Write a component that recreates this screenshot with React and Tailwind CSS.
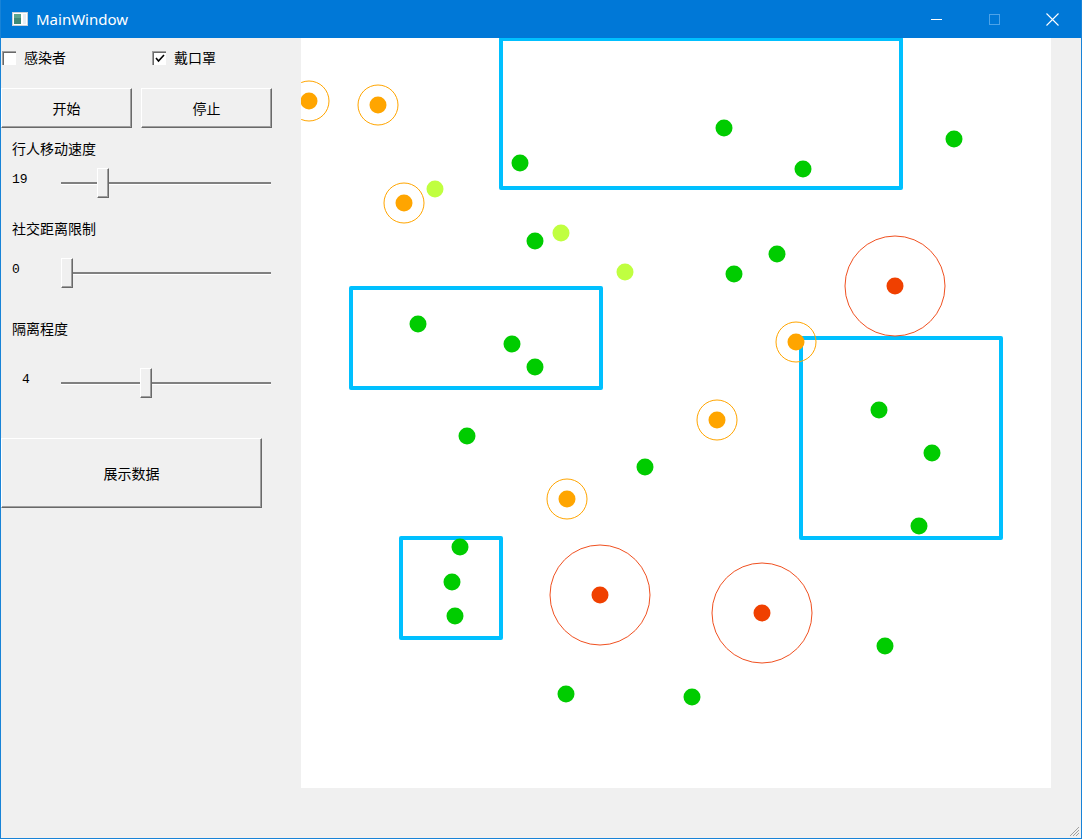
const CJK = { fontFamily: '"Noto Sans CJK SC", "Noto Sans", sans-serif' };
const MONO = { fontFamily: '"Liberation Mono", "DejaVu Sans Mono", monospace' };

const GREEN = '#00cc00';
const ORANGE = '#ffa500';
const RED = '#f04000';
const LIME = '#c0ff40';
const CYAN = '#00c0ff';

const ZONES = [
  { x: 200, y: 1, w: 400, h: 149 },
  { x: 50, y: 250, w: 250, h: 100 },
  { x: 500, y: 300, w: 200, h: 200 },
  { x: 100, y: 500, w: 100, h: 100 },
];

const EXPOSED = [[8, 63], [77, 67], [103, 165], [495, 304], [416, 382], [266, 461]];
const INFECTED = [[594, 248], [299, 557], [461, 575]];
const MASKED = [[134, 151], [260, 195], [324, 234]];
const HEALTHY = [
  [423, 90], [219, 125], [502, 131], [653, 101], [234, 203], [476, 216], [433, 236],
  [117, 286], [211, 306], [234, 329], [578, 372], [631, 415], [166, 398], [344, 429],
  [618, 488], [159, 509], [151, 544], [154, 578], [584, 608], [265, 656], [391, 659],
];

const Checkbox = ({ checked, label, className = '' }) => (
  <div className={`flex items-center gap-[8px] ${className}`}>
    <div className="w-[14px] h-[14px] bg-white border-t border-l border-[#a0a0a0] shadow-[inset_1px_1px_#696969] flex items-center justify-center">
      {checked && (
        <svg width="10" height="9" viewBox="0 0 10 9">
          <path d="M1 4 L3.5 7 L9 1" fill="none" stroke="#000" strokeWidth="1.6" />
        </svg>
      )}
    </div>
    <span className="text-[14px] text-black leading-none -mt-[2px]" style={CJK}>{label}</span>
  </div>
);

const Button = ({ children, className = '' }) => (
  <div
    className={`flex items-center justify-center bg-[#f0f0f0] border-t border-l border-white border-r border-b border-r-[#696969] border-b-[#696969] shadow-[inset_-1px_-1px_#a0a0a0] text-[14px] text-black ${className}`}
    style={CJK}
  >
    {children}
  </div>
);

const Slider = ({ value, offset, valueClass = 'pl-[11px]' }) => (
  <div className="flex items-center h-[30px]">
    <div className={`w-[60px] text-[13px] text-black -mt-[6px] ${valueClass}`} style={MONO}>{value}</div>
    <div className="relative w-[210px] h-[30px]">
      <div className="absolute left-0 right-0 top-[14px] h-[2px] bg-[#808080]" />
      <div className="absolute left-0 right-0 top-[16px] h-[1px] bg-white" />
      <div
        className="absolute top-0 w-[12px] h-[30px] bg-[#f0f0f0] border-t border-l border-white border-r border-b border-r-[#696969] border-b-[#696969] shadow-[inset_-1px_-1px_#a0a0a0]"
        style={{ left: offset }}
      />
    </div>
  </div>
);

const Label = ({ children, className = '' }) => (
  <div className={`h-[20px] flex items-center pl-[11px] text-[14px] text-black ${className}`} style={CJK}>
    {children}
  </div>
);

const Simulation = () => (
  <svg width="750" height="750" className="block bg-white">
    {ZONES.map((z, i) => (
      <rect key={i} x={z.x} y={z.y} width={z.w} height={z.h} fill="none" stroke={CYAN} strokeWidth="4" strokeLinejoin="round" />
    ))}
    {EXPOSED.map(([x, y], i) => (
      <g key={`e${i}`}>
        <circle cx={x} cy={y} r="20" fill="none" stroke={ORANGE} strokeWidth="1" />
        <circle cx={x} cy={y} r="8.5" fill={ORANGE} />
      </g>
    ))}
    {INFECTED.map(([x, y], i) => (
      <g key={`i${i}`}>
        <circle cx={x} cy={y} r="50" fill="none" stroke="#f05020" strokeWidth="1" />
        <circle cx={x} cy={y} r="8.5" fill={RED} />
      </g>
    ))}
    {MASKED.map(([x, y], i) => (
      <circle key={`m${i}`} cx={x} cy={y} r="8.5" fill={LIME} />
    ))}
    {HEALTHY.map(([x, y], i) => (
      <circle key={`h${i}`} cx={x} cy={y} r="8.5" fill={GREEN} />
    ))}
  </svg>
);

const TitleBar = () => (
  <div className="h-[38px] bg-[#0078d7] flex items-center text-white shrink-0">
    <svg width="16" height="14" viewBox="0 0 16 14" className="ml-[11px]">
      <rect x="0.5" y="0.5" width="15" height="13" fill="#fff" stroke="#c8d0d8" />
      <rect x="2" y="2" width="7" height="10" fill="#3f8a78" />
      <rect x="2" y="2" width="7" height="4" fill="#5aa590" />
      <rect x="11" y="2" width="3" height="10" fill="#e8eef4" />
    </svg>
    <span className="ml-[8px] text-[15px]" style={{ fontFamily: '"Noto Sans", "Open Sans", sans-serif' }}>MainWindow</span>
    <div className="ml-auto flex items-center h-full">
      <div className="w-[58px] h-full flex items-center justify-center">
        <div className="w-[11px] h-[1px] bg-white" />
      </div>
      <div className="w-[58px] h-full flex items-center justify-center">
        <div className="w-[11px] h-[11px] border border-[#4da3e8]" />
      </div>
      <div className="w-[58px] h-full flex items-center justify-center">
        <svg width="13" height="13" viewBox="0 0 13 13">
          <path d="M0.5 0.5 L12.5 12.5 M12.5 0.5 L0.5 12.5" stroke="#fff" strokeWidth="1.1" />
        </svg>
      </div>
    </div>
  </div>
);

export default function App() {
  return (
    <div className="w-[1082px] h-[839px] flex flex-col bg-[#f0f0f0] border-x border-b border-[#1883d7] overflow-hidden">
      <TitleBar />
      <div className="flex flex-1 relative">
        <div className="w-[300px] shrink-0 flex flex-col">
          <div className="mt-[12px] h-[16px] flex items-center">
            <Checkbox label="感染者" className="ml-[1px] w-[150px]" />
            <Checkbox checked label="戴口罩" />
          </div>
          <div className="mt-[22px] h-[40px] flex gap-[9px]">
            <Button className="w-[131px] h-[40px]">开始</Button>
            <Button className="w-[131px] h-[40px]">停止</Button>
          </div>
          <Label className="mt-[10px]">行人移动速度</Label>
          <div className="mt-[10px]">
            <Slider value="19" offset={36} />
          </div>
          <Label className="mt-[20px]">社交距离限制</Label>
          <div className="mt-[20px]">
            <Slider value="0" offset={0} />
          </div>
          <Label className="mt-[30px]">隔离程度</Label>
          <div className="mt-[30px]">
            <Slider value="4" offset={79} valueClass="pl-[21px]" />
          </div>
          <Button className="mt-[40px] w-[261px] h-[70px]">展示数据</Button>
        </div>
        <div>
          <Simulation />
        </div>
        <svg width="11" height="11" viewBox="0 0 11 11" className="absolute right-[1px] bottom-[1px]">
          <path d="M10 1 L1 10 M10 4 L4 10 M10 7 L7 10" stroke="#a0a0a0" strokeWidth="1" />
        </svg>
      </div>
    </div>
  );
}
